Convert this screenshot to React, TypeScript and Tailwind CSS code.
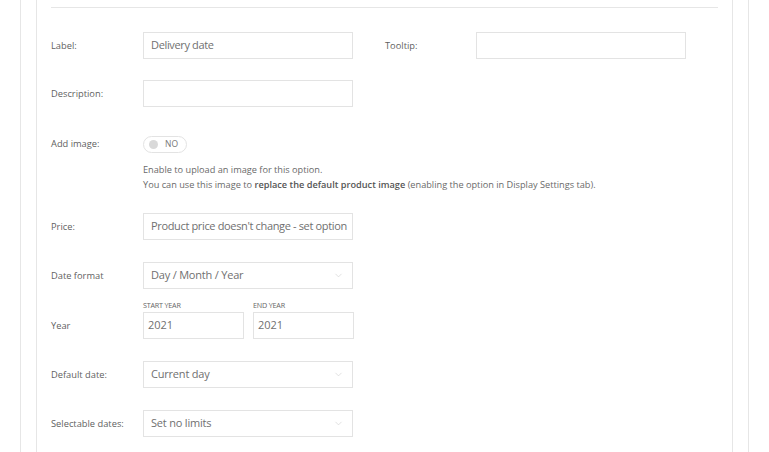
import { ChevronDown } from 'lucide-react';

const font = { fontFamily: '"Open Sans", "Noto Sans", sans-serif' };

function Row({ label, children, className = '' }: { label: string; children: React.ReactNode; className?: string }) {
  return (
    <div className={`flex items-center ${className}`}>
      <div className="w-[92px] shrink-0 text-[9.3px] text-[#5f5f5f]">{label}</div>
      {children}
    </div>
  );
}

function TextBox({ value = '' }: { value?: string }) {
  return (
    <div className="w-[210px] h-[27px] border border-[#e3e3e3] bg-white flex items-center px-[7px] text-[11px] tracking-[-0.35px] text-[#707070] whitespace-nowrap overflow-hidden">
      {value}
    </div>
  );
}

function Select({ value }: { value: string }) {
  return (
    <div className="w-[210px] h-[27px] border border-[#e3e3e3] bg-white flex items-center justify-between pl-[7px] pr-[8px] text-[11px] tracking-[-0.2px] text-[#707070]">
      <span>{value}</span>
      <ChevronDown size={11} strokeWidth={1.2} className="text-[#c8c8c8]" />
    </div>
  );
}

export default function App() {
  return (
    <div className="w-[769px] h-[452px] bg-white overflow-hidden" style={font}>
      <div className="mx-[20px] h-full border-x border-[#e6e6e6] px-[15px]">
        <div className="h-full border-x border-[#e6e6e6] bg-white px-[14px]">
          <div className="h-[8px] border-b border-[#e6e6e6]" />

          <div className="flex items-center mt-[24px]">
            <Row label="Label:">
              <TextBox value="Delivery date" />
            </Row>
            <div className="w-[91px] ml-[32px] shrink-0 text-[9.3px] text-[#5f5f5f]">Tooltip:</div>
            <TextBox />
          </div>

          <Row label="Description:" className="mt-[21px]">
            <TextBox />
          </Row>

          <div className="flex mt-[29px]">
            <div className="w-[92px] shrink-0 text-[9.3px] text-[#5f5f5f] pt-[1px]">Add image:</div>
            <div>
              <div className="w-[44px] h-[17px] rounded-full border border-[#e3e3e3] flex items-center gap-[7px] px-[5px]">
                <span className="w-[9px] h-[9px] rounded-full bg-[#d9d9d9]" />
                <span className="text-[8.5px] text-[#777]">NO</span>
              </div>
              <div className="mt-[9px] text-[9.2px] leading-[15px] text-[#6a6a6a]">
                <div>Enable to upload an image for this option.</div>
                <div>
                  You can use this image to <b className="font-semibold text-[#555]">replace the default product image</b> (enabling the option in Display Settings tab).
                </div>
              </div>
            </div>
          </div>

          <Row label="Price:" className="mt-[21px]">
            <TextBox value="Product price doesn't change - set option" />
          </Row>

          <Row label="Date format" className="mt-[22px]">
            <Select value="Day / Month / Year" />
          </Row>

          <div className="flex items-end mt-[12px]">
            <div className="w-[92px] shrink-0 text-[9.3px] text-[#5f5f5f] h-[27px] flex items-center">Year</div>
            <div className="flex gap-[9px]">
              <div>
                <div className="text-[7.2px] text-[#666] mb-[2px] leading-[9px] tracking-[-0.2px]">START YEAR</div>
                <div className="w-[101px] h-[27px] border border-[#e3e3e3] flex items-center px-[4px] text-[11px] text-[#707070]">2021</div>
              </div>
              <div>
                <div className="text-[7.2px] text-[#666] mb-[2px] leading-[9px] tracking-[-0.2px]">END YEAR</div>
                <div className="w-[101px] h-[27px] border border-[#e3e3e3] flex items-center px-[4px] text-[11px] text-[#707070]">2021</div>
              </div>
            </div>
          </div>

          <Row label="Default date:" className="mt-[22px]">
            <Select value="Current day" />
          </Row>

          <Row label="Selectable dates:" className="mt-[22px]">
            <Select value="Set no limits" />
          </Row>
        </div>
      </div>
    </div>
  );
}
